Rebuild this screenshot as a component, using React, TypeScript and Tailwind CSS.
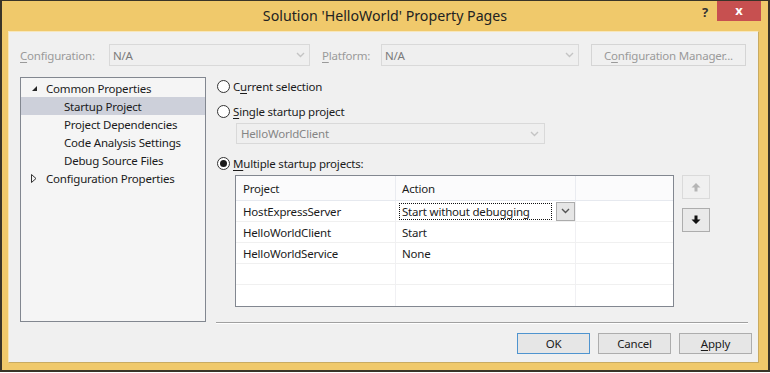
import React from 'react';

// Small chevron used by the combo boxes
const Chevron = ({ color = '#c4c4c4' }: { color?: string }) => (
  <svg width="9" height="6" viewBox="0 0 9 6">
    <path d="M1 1l3.5 3.5L8 1" fill="none" stroke={color} strokeWidth="1.4" />
  </svg>
);

const Arrow = ({ down, color }: { down?: boolean; color: string }) => (
  <svg width="10" height="10" viewBox="0 0 10 10" style={{ transform: down ? 'rotate(180deg)' : undefined }}>
    <path d="M5 1L9.5 5.5H6.5V9.5H3.5V5.5H0.5Z" fill={color} />
  </svg>
);

const Radio = ({ checked }: { checked?: boolean }) => (
  <span className="flex h-[13px] w-[13px] items-center justify-center rounded-full border border-[#333] bg-white">
    {checked && <span className="h-[7px] w-[7px] rounded-full bg-[#1a1a1a]" />}
  </span>
);

const u = (s: string) => <span className="underline underline-offset-2">{s}</span>;

function DisabledCombo({ text, width }: { text: string; width: string }) {
  return (
    <div className={`flex h-[22px] ${width} items-center justify-between border border-[#d9d9d9] bg-[#efefef] pl-[3px] pr-[4px] text-[#7a7a7a]`}>
      <span className="pt-px">{text}</span>
      <Chevron />
    </div>
  );
}

const treeItems = [
  { label: 'Common Properties', level: 0, open: true },
  { label: 'Startup Project', level: 1, selected: true },
  { label: 'Project Dependencies', level: 1 },
  { label: 'Code Analysis Settings', level: 1 },
  { label: 'Debug Source Files', level: 1 },
  { label: 'Configuration Properties', level: 0, open: false },
];

const rows = [
  { project: 'HostExpressServer', action: 'Start without debugging', editing: true },
  { project: 'HelloWorldClient', action: 'Start' },
  { project: 'HelloWorldService', action: 'None' },
  { project: '', action: '' },
  { project: '', action: '' },
];

export default function App() {
  return (
    <div className="h-[373px] w-[770px] bg-white font-['Noto_Sans',sans-serif] text-[11.5px] tracking-[-0.2px] text-[#1b1b1b]">
      <div className="flex h-[372px] flex-col border-b-2 border-l-2 border-r-2 border-t border-[#3a3428] bg-[#f0c96b]">
        {/* Title bar */}
        <div className="relative flex h-[30px] items-center justify-center">
          <span className="text-[14.2px] tracking-normal text-[#222]">Solution 'HelloWorld' Property Pages</span>
          <div className="absolute right-[7px] top-0 flex items-start">
            <span className="mr-[9px] mt-[2px] text-[13px] font-bold text-[#333]">?</span>
            <div className="flex h-[20px] w-[44px] items-center justify-center bg-[#c75050] text-[13px] font-bold text-white">
              x
            </div>
          </div>
        </div>

        {/* Client area */}
        <div className="ml-[6px] mr-[9px] flex h-[332px] flex-col border-b border-l border-r border-t border-b-[#c9ab62] border-l-[#f8e7bb] border-r-[#c9ab62] border-t-[#f8e7bb] bg-[#f0f0f0] pl-[11px] pr-[6px] pt-[12px]">
          {/* Configuration row */}
          <div className="flex h-[22px] items-center">
            <span className="w-[89px] pt-px text-[#9a9a9a]">{u('C')}onfiguration:</span>
            <DisabledCombo text="N/A" width="w-[201px]" />
            <span className="ml-[12px] w-[59px] pt-px text-[#9a9a9a]">{u('P')}latform:</span>
            <DisabledCombo text="N/A" width="w-[198px]" />
            <div className="ml-[12px] flex h-[22px] w-[155px] items-center justify-center border border-[#d5d5d5] bg-[#f0f0f0] pt-px text-[#9a9a9a]">
              C{u('o')}nfiguration Manager...
            </div>
          </div>

          {/* Main area */}
          <div className="mt-[11px] flex items-start">
            {/* Tree */}
            <div className="h-[245px] w-[186px] border border-[#828790] bg-[#f5f5f5] pt-px">
              {treeItems.map((it) => (
                <div
                  key={it.label}
                  className={`flex h-[18px] items-center pt-px ${it.selected ? 'bg-[#cdd0da]' : ''}`}
                >
                  {it.level === 0 ? (
                    <span className="ml-[10px] flex w-[15px] items-center">
                      {it.open ? (
                        <svg width="7" height="7" viewBox="0 0 7 7">
                          <path d="M6 1V6H1Z" fill="#262626" />
                        </svg>
                      ) : (
                        <svg width="6" height="9" viewBox="0 0 6 9">
                          <path d="M0.5 0.5L5 4.5L0.5 8.5Z" fill="none" stroke="#333" />
                        </svg>
                      )}
                    </span>
                  ) : (
                    <span className="w-[43px]" />
                  )}
                  <span>{it.label}</span>
                </div>
              ))}
            </div>

            {/* Right pane */}
            <div className="ml-[10px] flex h-[247px] w-[532px] flex-col">
              <div className="flex h-[18px] items-center">
                <span className="ml-px"><Radio /></span>
                <span className="ml-[3px] pt-px">C{u('u')}rrent selection</span>
              </div>
              <div className="mt-[7px] flex h-[18px] items-center">
                <span className="ml-px"><Radio /></span>
                <span className="ml-[3px] pt-px">{u('S')}ingle startup project</span>
              </div>
              <div className="ml-[20px] mt-[3px] flex h-[21px] w-[309px] items-center justify-between border border-[#d9d9d9] bg-[#efefef] pl-[4px] pr-[5px] text-[#858585]">
                <span className="pt-px">HelloWorldClient</span>
                <Chevron />
              </div>
              <div className="mt-[10px] flex h-[18px] items-center">
                <span className="ml-px"><Radio checked /></span>
                <span className="ml-[3px] pt-px">{u('M')}ultiple startup projects:</span>
              </div>

              <div className="mt-[3px] flex items-start">
                {/* Grid */}
                <div className="ml-[19px] h-[132px] w-[439px] border border-[#828790] bg-white">
                  <div className="flex h-[25px] border-b border-[#e6e9ef] bg-[#fbfbfc]">
                    <div className="flex w-[160px] items-center border-r border-[#e9ebf0] pl-[7px] pt-[2px]">Project</div>
                    <div className="flex w-[180px] items-center border-r border-[#e9ebf0] pl-[6px] pt-[2px]">Action</div>
                    <div className="flex-1" />
                  </div>
                  {rows.map((r, i) => (
                    <div key={i} className="flex h-[21px] border-b border-[#f0f0f0] last:border-b-0">
                      <div className="flex w-[160px] items-center border-r border-[#f0f0f3] pl-[7px] pt-[2px]">{r.project}</div>
                      <div className="flex w-[180px] items-center border-r border-[#f0f0f3]">
                        {r.editing ? (
                          <>
                            <div className="ml-[3px] flex h-[17px] w-[153px] items-center border border-dotted border-[#111] pl-[2px] pt-[2px]">
                              {r.action}
                            </div>
                            <div className="ml-[4px] flex h-[19px] w-[19px] items-center justify-center border border-[#acacac] bg-[#e6e6e6]">
                              <Chevron color="#555" />
                            </div>
                          </>
                        ) : (
                          <span className="pl-[6px] pt-[2px]">{r.action}</span>
                        )}
                      </div>
                      <div className="flex-1" />
                    </div>
                  ))}
                </div>

                {/* Move buttons */}
                <div className="ml-[8px] flex flex-col">
                  <div className="flex h-[24px] w-[28px] items-center justify-center border border-[#dadada] bg-[#f0f0f0]">
                    <Arrow color="#b5b5b5" />
                  </div>
                  <div className="mt-[9px] flex h-[24px] w-[28px] items-center justify-center border border-[#adadad] bg-[#e9e9e9]">
                    <Arrow down color="#111" />
                  </div>
                </div>
              </div>

              <div className="mt-auto h-[2px] border-b border-t border-b-white border-t-[#a0a0a0]" />
            </div>
          </div>

          {/* Dialog buttons */}
          <div className="mt-[9px] flex justify-end gap-[8px]">
            <div className="flex h-[21px] w-[73px] items-center justify-center border border-[#4f94cf] bg-[#e6e6e6] pt-px">OK</div>
            <div className="flex h-[21px] w-[73px] items-center justify-center border border-[#adadad] bg-[#e6e6e6] pt-px">Cancel</div>
            <div className="flex h-[21px] w-[73px] items-center justify-center border border-[#adadad] bg-[#e6e6e6] pt-px">{u('A')}pply</div>
          </div>
        </div>
        <div className="flex-1" />
      </div>
    </div>
  );
}
